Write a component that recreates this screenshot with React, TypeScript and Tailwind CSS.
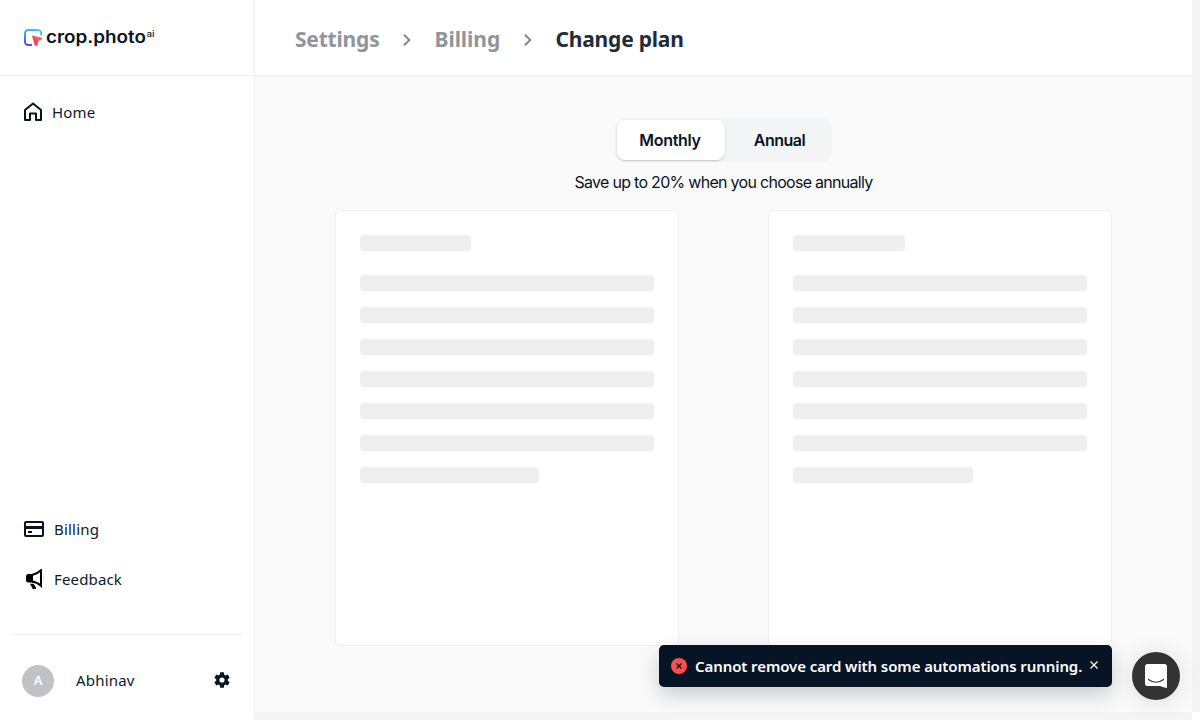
import React from "react";

function Logo() {
  return (
    <svg width="134" height="26" viewBox="0 0 134 26" role="img" aria-label="crop.photo ai">
      <defs>
        <linearGradient id="frame" x1="0.8" y1="0" x2="0.1" y2="1">
          <stop offset="0" stopColor="#3bc8fb" />
          <stop offset="0.5" stopColor="#3f9df8" />
          <stop offset="1" stopColor="#4545e8" />
        </linearGradient>
        <linearGradient id="pointer" x1="1" y1="0" x2="0.2" y2="1">
          <stop offset="0" stopColor="#ff8a3c" />
          <stop offset="0.5" stopColor="#fb4f55" />
          <stop offset="1" stopColor="#f9268e" />
        </linearGradient>
      </defs>
      <path d="M8 20H4.200A3.200 3.200 0 0 1 1 16.800V8.200A3.200 3.200 0 0 1 4.200 5H14A3.200 3.200 0 0 1 17.200 8.200V10.500" fill="none" stroke="url(#frame)" strokeWidth="1.900" />
      <path d="M7.800 10.600 17.300 12.600Q19 13.300 17.900 14.600L14.300 16.100 13.300 20.300Q12 21.700 10.800 20.300Z" fill="url(#pointer)" />
      <text x="22" y="18" fontFamily="Inter, sans-serif" fontWeight="600" fontSize="17" textLength="100" lengthAdjust="spacingAndGlyphs" fill="#071425">crop.photo</text>
      <text x="122.500" y="12" fontFamily="Inter, sans-serif" fontSize="9" textLength="8" lengthAdjust="spacingAndGlyphs" fill="#071425">ai</text>
    </svg>
  );
}

function Chevron() {
  return (
    <svg width="8" height="12" viewBox="0 0 8 12" fill="none" stroke="#7f8890" strokeWidth="1.900">
      <path d="M1 .8 6.300 6 1 11.200" />
    </svg>
  );
}

function PlanSkeleton() {
  return (
    <div className="flex h-[436px] w-[343.800px] flex-col rounded-md border border-[#f0f0f0] bg-white p-6">
      <div className="h-4 w-[111.400px] shrink-0 rounded bg-[#efefef]" />
      <div className="mt-6 flex flex-col gap-4">
        {[0, 1, 2, 3, 4, 5].map((row) => (
          <div key={row} className="h-4 rounded bg-[#efefef]" />
        ))}
        <div className="h-4 w-[179.400px] rounded bg-[#efefef]" />
      </div>
    </div>
  );
}

function Sidebar() {
  return (
    <aside className="flex h-full w-[255px] shrink-0 flex-col border-r border-[#efefef] bg-white text-[15px] font-[450] text-[#0c182a]">
      <div className="flex h-[76px] shrink-0 items-start border-b border-[#efefef] pt-[25px] pl-6">
        <Logo />
      </div>
      <a className="mt-[24px] flex h-6 items-center pl-[23px]">
        <svg width="20" height="20" viewBox="0 0 20 20" fill="none" stroke="#071425" strokeWidth="2">
          <path d="M2 18V8L10 1.500 18 8v10h-5V11.500H7V18Z" strokeLinejoin="round" />
        </svg>
        <span className="ml-[9px] tracking-[0.2px]">Home</span>
      </a>
      <a className="mt-auto flex h-6 items-center pl-6">
        <svg width="20" height="16" viewBox="0 0 20 16" fill="none" stroke="#071425" strokeWidth="2">
          <rect x="1" y="1" width="18" height="14" rx="1" />
          <path d="M1 6.500h18" strokeWidth="3" />
          <path d="M4 11h4" />
        </svg>
        <span className="ml-[10px] tracking-[0.2px]">Billing</span>
      </a>
      <a className="mt-[26px] flex h-6 items-center pl-6">
        <svg width="20" height="20" viewBox="0 0 20 20">
          <path d="M4.500 5H9V13.500H4.500Q2 13.500 2 11V7.500Q2 5 4.500 5Z" fill="#000" />
          <path d="M8 6Q13 5 17 1.200V16.800Q13 13 8 12.500" fill="none" stroke="#000" strokeWidth="2" />
          <path d="M6 14.800H9.500L12 18.500V20H8.800Z" fill="#000" />
          <path d="M19.500 7.500v1M19.500 10.500v1" stroke="#999" strokeWidth=".8" />
        </svg>
        <span className="ml-[10px] tracking-[0.15px]">Feedback</span>
      </a>
      <div className="mx-3 mt-[43px] border-t border-[#efefef]" />
      <div className="mt-[29px] mb-[24px] flex h-8 items-center pl-[22px]">
        <div className="mt-[2px] flex h-8 w-8 shrink-0 items-center justify-center rounded-full bg-[#bfc2c7] text-[13px] font-semibold text-white">A</div>
        <span className="ml-[22px] tracking-[0.2px]">Abhinav</span>
        <svg className="mr-[24px] ml-auto" width="16" height="16" viewBox="3 3 18 18" fill="#071425">
          <path d="M19.140 12.940c.04-.3.060-.61.060-.94s-.02-.64-.07-.94l2.030-1.580a.49.49 0 0 0 .12-.61l-1.920-3.320a.488.488 0 0 0-.59-.22l-2.390.96a7 7 0 0 0-1.620-.94l-.36-2.540a.484.484 0 0 0-.48-.41h-3.840a.48.48 0 0 0-.47.41l-.36 2.540c-.59.24-1.130.57-1.620.94l-2.390-.96a.48.48 0 0 0-.59.22L2.740 8.870a.47.47 0 0 0 .12.61l2.030 1.580c-.05.3-.09.63-.09.94s.02.64.07.94l-2.030 1.580a.49.49 0 0 0-.12.61l1.920 3.320c.12.22.37.29.59.22l2.390-.96c.5.38 1.030.7 1.620.94l.36 2.540c.05.24.24.41.48.41h3.840c.24 0 .44-.17.47-.41l.36-2.540a7 7 0 0 0 1.620-.94l2.390.96c.22.08.47 0 .59-.22l1.920-3.320a.47.47 0 0 0-.12-.61ZM12 15.200a3.200 3.200 0 1 1 0-6.400 3.200 3.200 0 0 1 0 6.400Z" transform="translate(1.140 1.140) scale(.905)" />
        </svg>
      </div>
    </aside>
  );
}

export default function App() {
  return (
    <div className="relative flex h-[720px] w-[1200px] overflow-hidden bg-[#fafafa] font-['Noto_Sans','Open_Sans',sans-serif]">
      <Sidebar />
      <div className="flex w-[937px] flex-col">
        <header className="flex h-[77px] shrink-0 items-center border-b-2 border-[#f2f2f2] bg-white pt-[5px] pl-10 text-[21px] font-bold tracking-[-0.2px] text-[#8f959b]">
          <span className="w-[107.500px]">Settings</span>
          <Chevron />
          <span className="ml-[24px] w-[89px] tracking-[-0.050px]">Billing</span>
          <Chevron />
          <span className="ml-[24px] whitespace-nowrap text-[#1f2c39]">Change plan</span>
        </header>
        <main className="flex flex-1 flex-col items-center pt-[41px] font-['Inter',sans-serif] text-[#071425]">
          <div className="flex h-11 w-[217px] rounded-[10px] bg-[#f3f4f6] p-0.5 text-base font-semibold">
            <button className="flex w-[108px] items-center justify-center rounded-lg bg-white pr-[2px] tracking-[-0.3px] shadow-[0_1px_2px_rgba(0,0,0,0.2)]">Monthly</button>
            <button className="flex flex-1 items-center justify-center pl-[4px] tracking-[-0.500px]">Annual</button>
          </div>
          <p className="mt-2 text-base leading-6 tracking-[-0.710px]">Save up to 20% when you choose annually</p>
          <div className="mt-4 flex w-[777px] justify-between">
            <PlanSkeleton />
            <PlanSkeleton />
          </div>
        </main>
        <div className="h-2 shrink-0 bg-[#f4f4f4]" />
      </div>
      <div className="flex w-2 flex-col bg-[#f4f4f4]">
        <div className="mt-auto h-2 bg-white" />
      </div>
      <div className="absolute top-[645px] left-[659px] flex h-[42px] w-[453px] items-center rounded-[5px] bg-[#071425] pl-3 text-[15px] font-semibold text-white shadow-[0_8px_20px_rgba(7,20,37,0.2)]">
        <svg width="16" height="16" viewBox="0 0 16 16">
          <circle cx="8" cy="8" r="8" fill="#ff4d4f" />
          <path d="m5.500 5.500 5 5m0-5-5 5" stroke="#071425" strokeWidth="1.300" />
        </svg>
        <span className="ml-2 w-[395px] tracking-[-0.090px] whitespace-nowrap">Cannot remove card with some automations running.</span>
        <svg width="8" height="8" viewBox="0 0 8 8" stroke="#fff" strokeWidth="1.300" className="mb-[2px]">
          <path d="m.5.5 7 7m0-7-7 7" />
        </svg>
      </div>
      <button className="absolute top-[652px] left-[1132px] flex h-12 w-12 items-center justify-center rounded-full bg-[#333] shadow-[0_2px_24px_rgba(0,0,0,0.12)]">
        <svg width="22" height="24" viewBox="0 0 22 24">
          <path d="M2.500 0h17Q22 0 22 2.500V24Q18.500 23.300 15 22H2.500Q0 22 0 19.500V2.500Q0 0 2.500 0Z" fill="#fff" />
          <path d="M3.500 15.500Q11 21 18.500 15.500" fill="none" stroke="#333" strokeWidth="1.200" strokeLinecap="round" />
        </svg>
      </button>
    </div>
  );
}
